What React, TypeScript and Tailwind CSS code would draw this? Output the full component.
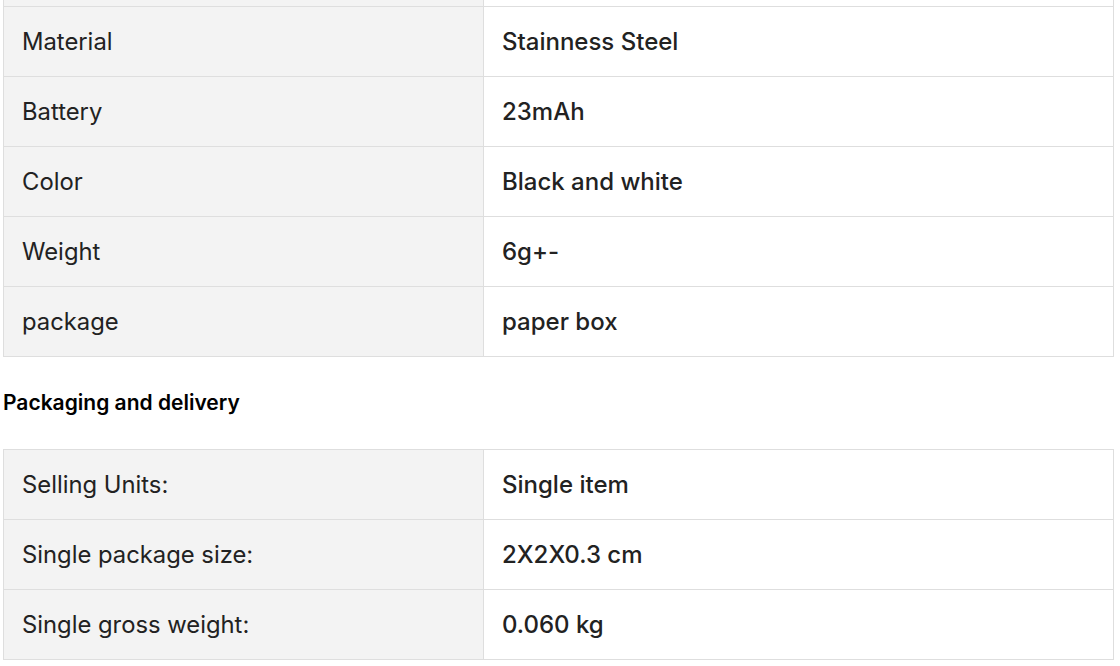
const specs = [
  { label: "Material", value: "Stainness Steel" },
  { label: "Battery", value: "23mAh" },
  { label: "Color", value: "Black and white" },
  { label: "Weight", value: "6g+-" },
  { label: "package", value: "paper box" },
];

const delivery = [
  { label: "Selling Units:", value: "Single item" },
  { label: "Single package size:", value: "2X2X0.3 cm" },
  { label: "Single gross weight:", value: "0.060 kg" },
];

function Row({ label, value }: { label: string; value: string }) {
  return (
    <div className="flex h-[70px] border-b border-[#dedede]">
      <div className="flex w-[480px] items-center border-r border-[#dedede] bg-[#f3f3f3] pt-[1px] pl-[18px] text-[23.8px]">{label}</div>
      <div className="flex flex-1 items-center pt-[1px] pl-[18px] font-medium">{value}</div>
    </div>
  );
}

export default function App() {
  return (
    <div className="min-h-[666px] bg-white pl-[3px] font-['Inter',sans-serif] text-[24px] text-[#222]">
      <div className="w-[1111px] border-x border-[#dedede]">
        {/* tail of the row above */}
        <div className="flex h-[7px] border-b border-[#dedede]">
          <div className="w-[480px] border-r border-[#dedede] bg-[#f3f3f3]"></div>
          <div className="flex-1"></div>
        </div>
        {specs.map((s) => (
          <Row key={s.label} {...s} />
        ))}
      </div>

      <h3 className="my-8 h-7 text-[21px] leading-7 font-semibold text-black">Packaging and delivery</h3>

      <div className="w-[1111px] border-x border-t border-[#dedede]">
        {delivery.map((s) => (
          <Row key={s.label} {...s} />
        ))}
      </div>
    </div>
  );
}
